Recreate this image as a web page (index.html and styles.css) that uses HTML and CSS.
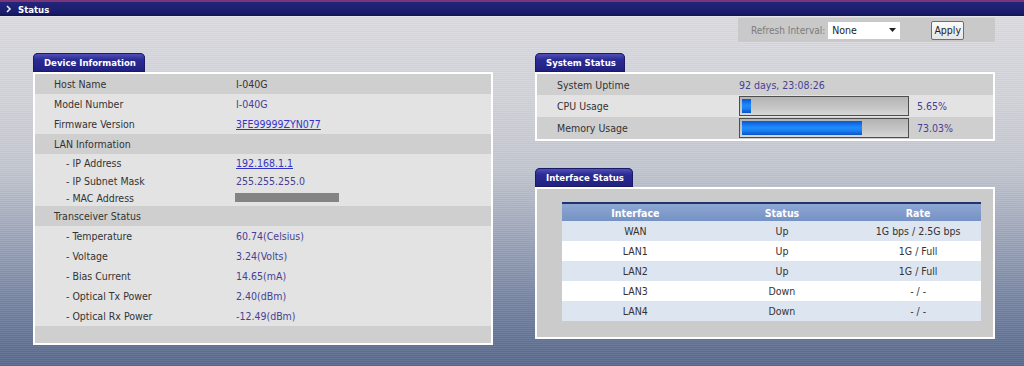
FILE: index.html
```html
<!DOCTYPE html>
<html>
<head>
<meta charset="utf-8">
<title>Status</title>
<link rel="stylesheet" href="styles.css">
</head>
<body>
<!--标题栏-->
<div class="topbar">
  <svg class="chev" width="6" height="8" viewBox="0 0 6 8"><polyline points="1,1 4,4 1,7" fill="none" stroke="#e8e8f4" stroke-width="1.6"/></svg>
  <span>Status</span>
</div>

<div class="page">
  <!--刷新-->
  <div class="toolbar">
    <div class="refresh">
      <span class="refresh-label">Refresh Interval:</span>
      <span class="select">None<svg width="7" height="4" viewBox="0 0 7 4"><polygon points="0,0 7,0 3.5,4" fill="#222"/></svg></span>
      <button class="apply">Apply</button>
    </div>
  </div>

  <div class="columns">
    <!--左栏-->
    <div class="col">
      <div class="card">
        <div class="tab">Device Information</div>
        <div class="panel">
          <div class="row dark"><span class="k">Host Name</span><span class="v plain">I-040G</span></div>
          <div class="row"><span class="k">Model Number</span><span class="v">I-040G</span></div>
          <div class="row"><span class="k">Firmware Version</span><a class="v link" href="#">3FE99999ZYN077</a></div>
          <div class="row dark"><span class="k">LAN Information</span></div>
          <div class="row sub first"><span class="k">- IP Address</span><a class="v link" href="#">192.168.1.1</a></div>
          <div class="row sub tight"><span class="k">- IP Subnet Mask</span><span class="v">255.255.255.0</span></div>
          <div class="row sub tight"><span class="k">- MAC Address</span><span class="mask"></span></div>
          <div class="row dark"><span class="k">Transceiver Status</span></div>
          <div class="row sub"><span class="k">- Temperature</span><span class="v">60.74(Celsius)</span></div>
          <div class="row sub"><span class="k">- Voltage</span><span class="v">3.24(Volts)</span></div>
          <div class="row sub"><span class="k">- Bias Current</span><span class="v">14.65(mA)</span></div>
          <div class="row sub"><span class="k">- Optical Tx Power</span><span class="v">2.40(dBm)</span></div>
          <div class="row sub"><span class="k">- Optical Rx Power</span><span class="v">-12.49(dBm)</span></div>
          <div class="row dark foot"></div>
        </div>
      </div>
    </div>

    <!--右栏-->
    <div class="col">
      <div class="card">
        <div class="tab">System Status</div>
        <div class="panel">
          <div class="row dark sys"><span class="k">System Uptime</span><span class="v">92 days, 23:08:26</span></div>
          <div class="row sys tall"><span class="k">CPU Usage</span><span class="bar"><span class="fill" style="width:5.65%"></span></span><span class="v pct">5.65%</span></div>
          <div class="row dark sys tall"><span class="k">Memory Usage</span><span class="bar"><span class="fill" style="width:73.03%"></span></span><span class="v pct">73.03%</span></div>
        </div>
      </div>

      <div class="card iface">
        <div class="tab">Interface Status</div>
        <div class="panel grey">
          <table class="ports">
            <tr><th class="c1">Interface</th><th class="c2">Status</th><th>Rate</th></tr>
            <tr><td>WAN</td><td>Up</td><td>1G bps / 2.5G bps</td></tr>
            <tr><td>LAN1</td><td>Up</td><td>1G / Full</td></tr>
            <tr><td>LAN2</td><td>Up</td><td>1G / Full</td></tr>
            <tr><td>LAN3</td><td>Down</td><td>- / -</td></tr>
            <tr><td>LAN4</td><td>Down</td><td>- / -</td></tr>
          </table>
        </div>
      </div>
    </div>
  </div>
</div>
</body>
</html>
```

FILE: styles.css
```css
/*清除默认样式*/
body,div,span,table,td,th{padding:0; margin:0;}
body{
  width:1024px; height:366px; overflow:hidden;
  font-family:"DejaVu Sans Condensed","DejaVu Sans",sans-serif; font-size:10.5px; color:#333;
  background:
    repeating-linear-gradient(to bottom, rgba(255,255,255,0.06) 0 1px, rgba(0,0,0,0.03) 1px 2px),
    linear-gradient(to bottom, #dedee3 0, #d3d4da 100px, #c3c7d0 170px, #a2aabd 230px, #7886a4 300px, #5a6a8d 366px);
}

/*标题栏*/
.topbar{height:14px; border-top:2px solid #7a3676; background:linear-gradient(to bottom,#23257c,#1b1d6c 70%,#121456); border-bottom:1px solid #e6e6ea; display:flex; align-items:center; color:#fff; font-weight:bold; font-size:9.5px;}
.chev{margin-left:6px; margin-right:6px;}

.page{padding-left:33px; width:962px;}

/*刷新*/
.toolbar{display:flex; justify-content:flex-end; margin-top:1px;}
.refresh{width:244px; height:24px; padding-left:13px; background:#c9c9c9; display:flex; align-items:center;}
.refresh-label{color:#7c7c7c; font-size:10px;}
.select{width:64px; height:17px; margin-left:3px; padding-left:4px; background:#fff; color:#222; display:flex; align-items:center; justify-content:space-between; padding-right:4px; box-sizing:content-box;}
.apply{margin-left:31px; width:33px; height:19px; padding:0; border:1px solid #6e6e6e; border-radius:2px; background:linear-gradient(#fafafa,#e6e6e6); font-family:inherit; font-size:10.5px; color:#222;}

.columns{display:flex; gap:42px; margin-top:11px;}
.col{width:460px;}

/*面板*/
.tab{display:inline-block; height:19px; line-height:20px; padding:0 9px 0 11px; border-radius:5px 5px 0 0; background:linear-gradient(to bottom,#5656bc,#2b2b95 35%,#20207f); color:#fff; font-weight:bold; font-size:9.5px; box-shadow:inset 0 0 0 1px #1a1a66;}
.panel{border:2px solid #fff; background:#e3e3e3;}
.panel.grey{background:#cbcbcb; padding:13px 0 16px 25px;}
.iface{margin-top:27px;}

.row{display:flex; align-items:center; height:20px;}
.row.dark{background:#cfcfcf;}
.row .k{width:182px; padding-left:19px; flex:none;}
.row.sub .k{width:170px; padding-left:31px;}
.row.first{height:18px;}
.row.tight{height:17px;}
.row.foot{height:17px;}
.row.sys .k{padding-left:20px;}
.row.sys{height:21px;}
.row.sys.tall{height:22px;}

.v{color:#463f96;}
.v.plain{color:#333;}
.link{color:#3434c4; text-decoration:underline;}
.mask{width:104px; height:9px; background:#848484; margin-left:-1px;}

/*进度条*/
.bar{width:164px; height:14px; padding:2px; border:1px solid #4e4e4e; background:linear-gradient(to bottom,#b4b4b4,#c6c6c6 60%,#d8d8d8);}
.fill{display:block; height:14px; background:linear-gradient(to bottom,#0b56d6,#1f8cfa 45%,#1a7ff0 70%,#0a52c8);}
.pct{margin-left:8px;}

/*接口表*/
.ports{width:419px; border-collapse:collapse;}
.ports th{height:17px; border-top:2px solid #1f3570; background:linear-gradient(to bottom,#8ea7d3,#7592c4); color:#fff; font-weight:bold; font-size:10.5px;}
.ports th.c1,.ports th.c2{width:35%;}
.ports td{height:20px; text-align:center; color:#333; background:#fff;}
.ports tr:nth-child(even) td{background:#dde5f0;}
```
